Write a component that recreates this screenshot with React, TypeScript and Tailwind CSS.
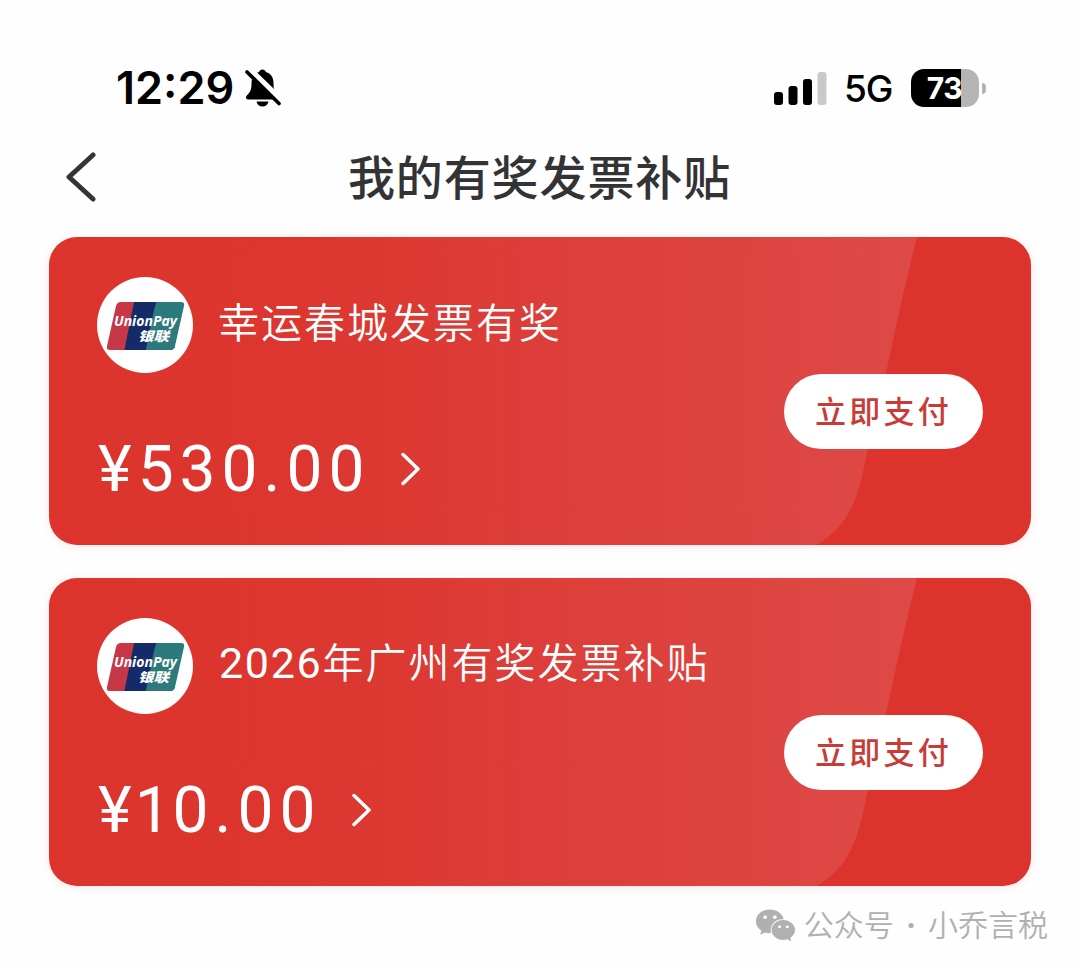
import { FaWeixin } from 'react-icons/fa';

interface Subsidy {
  id: string;
  year?: string;
  title: string;
  amount: string;
}

const subsidies: Subsidy[] = [
  { id: 'chuncheng', title: '幸运春城发票有奖', amount: '530.00' },
  { id: 'guangzhou', year: '2026', title: '年广州有奖发票补贴', amount: '10.00' },
];

const StatusBar = () => (
  <div className="flex h-[50px] items-center justify-between pr-[94px] pl-[116px]">
    <div className="flex items-center">
      <span className="w-[120px] font-['Inter','Liberation_Sans',sans-serif] text-[45px] leading-[50px] font-semibold whitespace-nowrap">
        12<span className="relative -top-[2px]">:</span>29
      </span>
      <svg className="ml-[8px] h-[40px] w-[40px]" viewBox="0 0 40 40">
        <path d="M18.500 1.500c-1.800 0-3 1-3.400 2.500C10 5.500 7.500 9.500 7.500 15c0 7-1.200 9-4.300 12-2 2-1.400 4.500 1.100 4.500h28.400c2.500 0 3.100-2.500 1.100-4.500-3.100-3-4.300-5-4.300-12 0-5.500-2.500-9.500-7.600-11-.4-1.500-1.600-2.500-3.400-2.500z" />
        <path d="M12.500 33.500h12c-.6 3-3 5-6 5s-5.400-2-6-5z" />
        <path d="M4.500 0l37 36" stroke="white" strokeWidth="5.500" />
        <path d="M3 4l32 31.500" stroke="black" strokeWidth="3.600" strokeLinecap="round" />
      </svg>
    </div>
    <div className="flex items-center">
      <svg className="h-[34px] w-[54px]" viewBox="0 0 54 34">
        <rect x="1" y="21" width="9" height="13" rx="3" />
        <rect x="15.500" y="15" width="9" height="19" rx="3" />
        <rect x="30" y="8" width="9" height="26" rx="3" />
        <rect x="44.500" y="1" width="9" height="33" rx="3" fill="#c9c9c9" />
      </svg>
      <span className="ml-[17px] w-[50px] pt-[2px] font-['Inter','Liberation_Sans',sans-serif] text-[37px] leading-[48px] font-medium tracking-[-1px]">5G</span>
      <div className="ml-[17px] flex h-[38px] w-[68px] items-center justify-center rounded-[13px] bg-[linear-gradient(90deg,#000_50px,#b5b5b5_50px)] pr-[1px] font-['Inter','Liberation_Sans',sans-serif] text-[30px] leading-none font-bold tracking-[-0.5px] text-white">
        73
      </div>
      <div className="ml-[3px] h-[11px] w-[4px] rounded-r-full bg-[#b5b5b5]" />
    </div>
  </div>
);

const UnionPayLogo = () => (
  <svg className="h-24 w-24" viewBox="0 0 96 96">
    <defs>
      <clipPath id="unionpay-plate">
        <path d="M24 25H84q4 0 3 4L78 69q-1 4-5 4H13q-4 0-3-4L19 29q1-4 5-4z" />
      </clipPath>
    </defs>
    <circle cx="48" cy="48" r="48" fill="white" />
    <g clipPath="url(#unionpay-plate)">
      <path d="M0 20h50v60H0z" fill="#c73846" />
      <path d="M38 20h40v60H26z" fill="#152a68" />
      <path d="M62 20h40v60H49q-1-4 0-8l8-39q2-8 5-13z" fill="#2c7a7b" />
    </g>
    <text x="17" y="49" fill="white" textLength="63" lengthAdjust="spacingAndGlyphs" className="font-['Open_Sans','Liberation_Sans',sans-serif] text-[15px] font-bold italic">
      UnionPay
    </text>
    <text x="41" y="64" fill="white" textLength="31" lengthAdjust="spacingAndGlyphs" className="font-['Noto_Sans_CJK_SC',sans-serif] text-[13px] font-black italic">
      银联
    </text>
  </svg>
);

const CardBackground = () => (
  <svg className="absolute inset-0 h-full w-full" viewBox="0 0 982 308" preserveAspectRatio="none">
    <defs>
      <linearGradient id="card-sheen" x1="0" x2="868" y1="0" y2="0" gradientUnits="userSpaceOnUse">
        <stop offset="0" stopColor="#e4a0b0" stopOpacity="0" />
        <stop offset="0.300" stopColor="#e4a0b0" stopOpacity="0.020" />
        <stop offset="1" stopColor="#e4a0b0" stopOpacity="0.200" />
      </linearGradient>
    </defs>
    <path d="M0 0H868Q854 55 837 136L818 215C810 260 800 290 767 308H0z" fill="url(#card-sheen)" />
  </svg>
);

// A leading 1 is set closer so that it does not leave a gap after the yen sign
const Amount = ({ value }: { value: string }) => (
  <span className="pt-[1px] pl-[1px] font-['Roboto','Liberation_Sans',sans-serif] text-[64px] leading-[71px] font-normal tracking-[6px] whitespace-nowrap">
    ¥{value.startsWith('1') ? <span className="-mr-[4px] -ml-[3px]">1</span> : value[0]}
    {value.slice(1)}
  </span>
);

const SubsidyCard = ({ subsidy }: { subsidy: Subsidy }) => (
  <section className="relative h-[308px] overflow-hidden rounded-[28px] bg-[#dc342d] text-white shadow-[0_1px_8px_rgba(220,52,45,0.12)]">
    <CardBackground />
    <div className="relative flex h-full items-center justify-between px-[48px]">
      <div className="flex h-full flex-col pt-10">
        <div className="flex items-center">
          <UnionPayLogo />
          <h2 className="ml-[25px] pb-[10px] font-['Noto_Sans_CJK_SC',sans-serif] text-[41px] leading-[60px] font-[350] tracking-[2px] whitespace-nowrap">
            {subsidy.year ? <span className="pl-[1px] font-['Roboto',sans-serif] text-[43px] font-normal tracking-[1.700px]">{subsidy.year}</span> : null}
            {subsidy.title}
          </h2>
        </div>
        <div className="mt-[60px] flex items-center">
          <Amount value={subsidy.amount} />
          <svg className="ml-[31px] h-[34px] w-[20px]" viewBox="0 0 20 34" fill="none" stroke="white" strokeWidth="3.500" strokeLinecap="round" strokeLinejoin="round">
            <path d="M2 2.500l15 14.500L2 31.500" />
          </svg>
        </div>
      </div>
      <button type="button" className="mt-[40px] h-[75px] w-[199px] rounded-full bg-white pb-[3px] font-['Noto_Sans_CJK_SC',sans-serif] text-[31px] leading-none font-medium tracking-[3.300px] text-[#c83c38]">
        立即支付
      </button>
    </div>
  </section>
);

const App = () => (
  <main className="h-[968px] overflow-hidden bg-[#fefefe] pt-[63px] text-black">
    <StatusBar />
    <header className="mt-[24px] flex h-20 items-center px-[65px]">
      <svg className="h-[50px] w-[32px]" viewBox="0 0 32 50" fill="none" stroke="#353537" strokeWidth="5" strokeLinecap="round" strokeLinejoin="round">
        <path d="M28 3L4 25l24 22" />
      </svg>
      <h1 className="flex-1 pr-[33px] pb-[4px] text-center font-['Noto_Sans_CJK_SC',sans-serif] text-[47px] leading-[70px] font-medium tracking-[0.900px] text-[#333335]">
        我的有奖发票补贴
      </h1>
    </header>
    <div className="mt-[20px] flex flex-col gap-[33px] px-[49px]">
      {subsidies.map((subsidy) => (
        <SubsidyCard key={subsidy.id} subsidy={subsidy} />
      ))}
    </div>
    <footer className="mt-[18px] flex items-center justify-end pr-[32px] text-[#b0b0b0]">
      <FaWeixin className="h-[41px] w-[41px]" />
      <span className="ml-[8px] font-['Open_Sans','Noto_Sans_CJK_SC',sans-serif] text-[30px] leading-[42px] font-[350] whitespace-nowrap [word-spacing:5px]">
        公众号 <b>·</b> 小乔言税
      </span>
    </footer>
  </main>
);

export default App;
